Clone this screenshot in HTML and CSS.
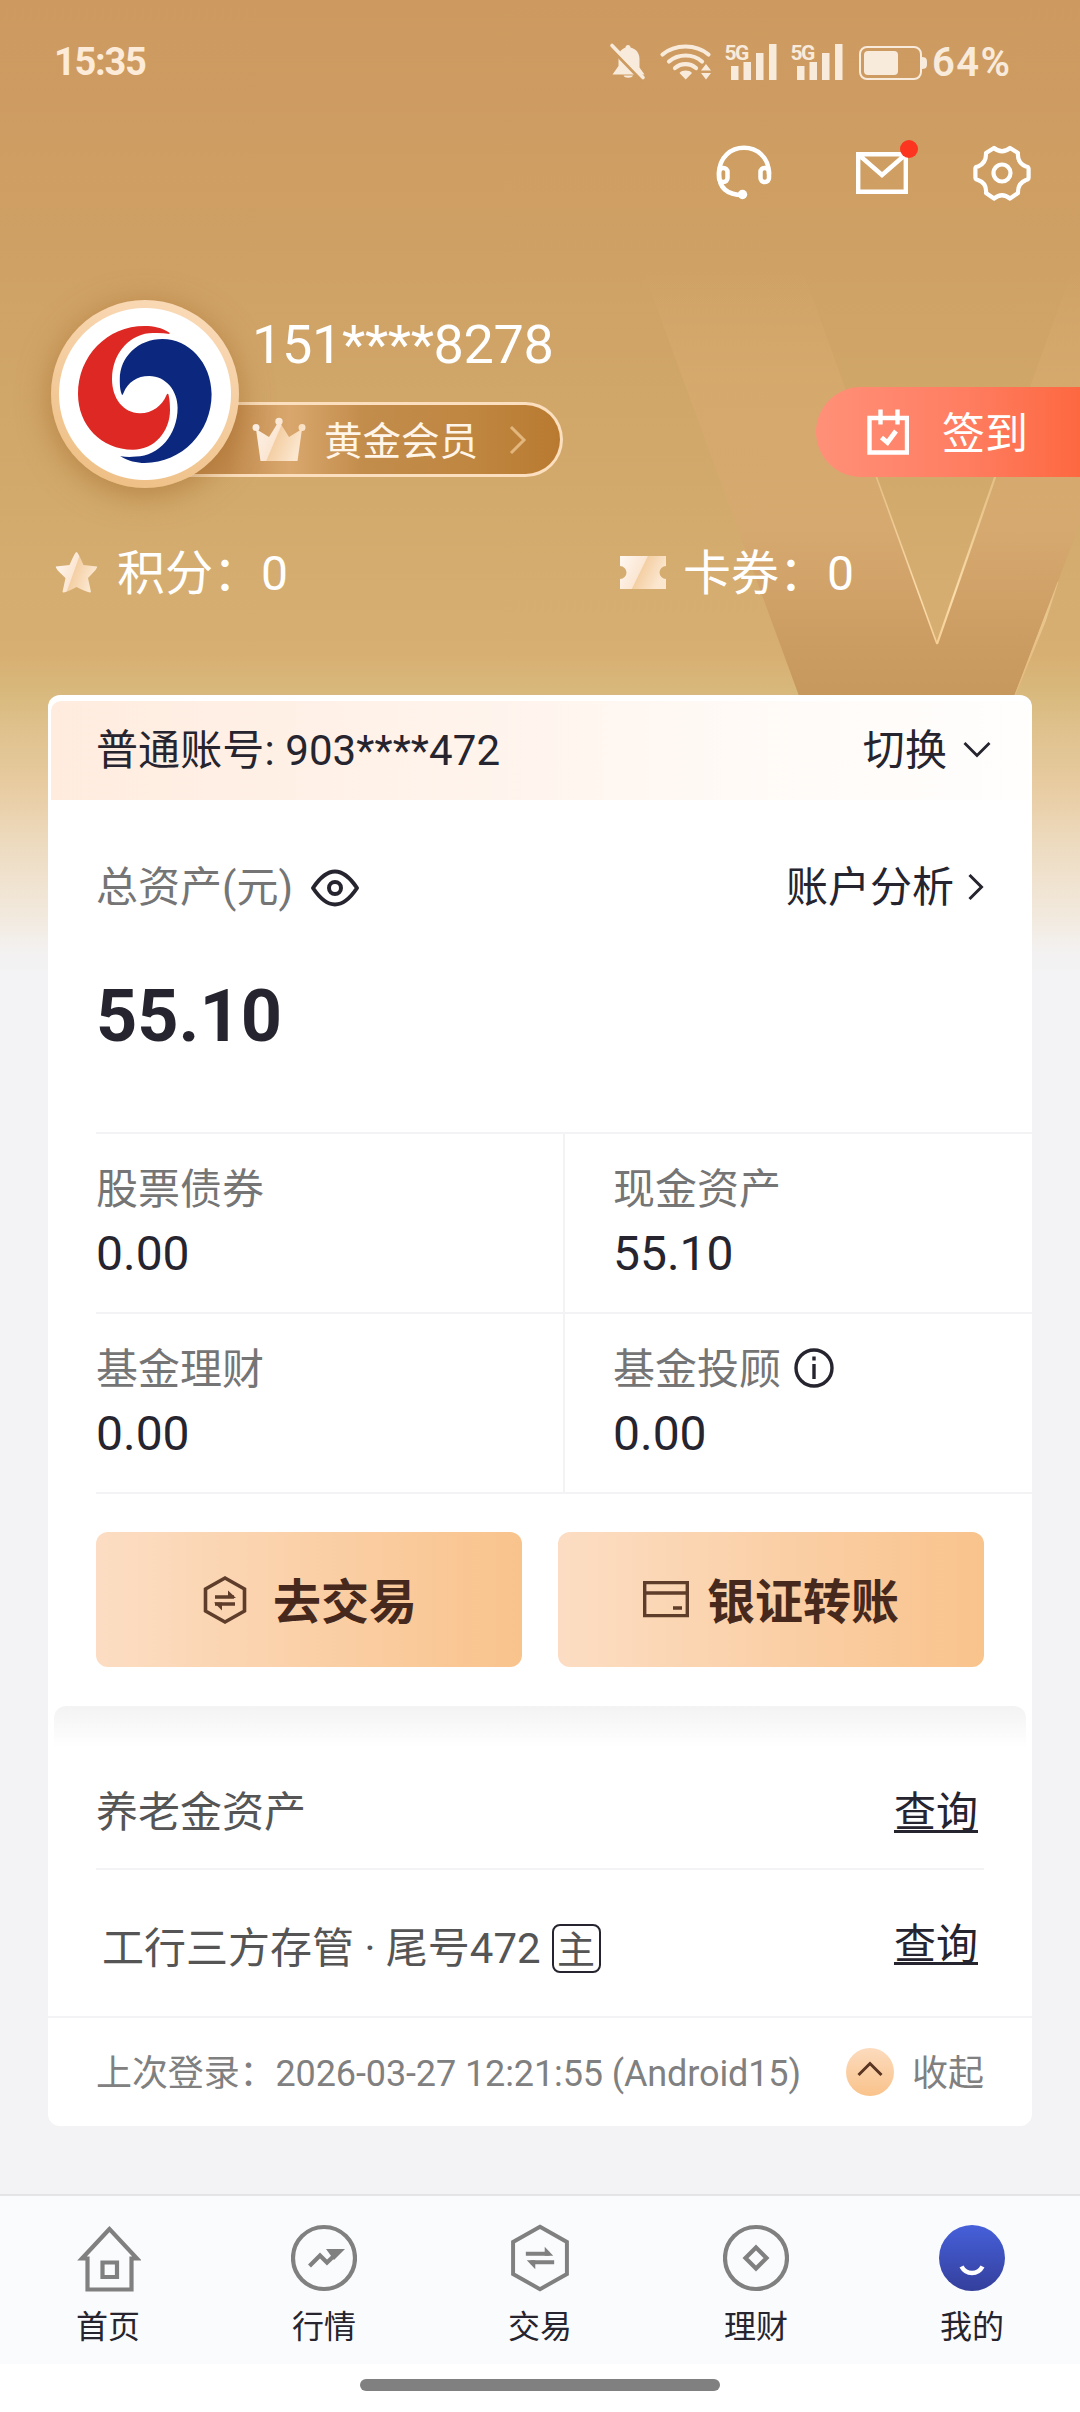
FILE: index.html
```html
<!DOCTYPE html>
<html lang="zh-CN">
<head>
<meta charset="utf-8">
<title>我的</title>
<link rel="stylesheet" href="styles.css">
</head>
<body>
<div class="page">
  <svg class="backdrop" width="1080" height="960" viewBox="0 0 1080 960" aria-hidden="true">
    <defs>
      <linearGradient id="vFill" x1="0" y1="270" x2="0" y2="700" gradientUnits="userSpaceOnUse">
        <stop offset="0" stop-color="#d8aa70" stop-opacity="0"/>
        <stop offset=".25" stop-color="#d7aa6e" stop-opacity=".7"/>
        <stop offset=".6" stop-color="#d6a970"/>
        <stop offset=".86" stop-color="#cc9d63"/>
        <stop offset="1" stop-color="#c6985e"/>
      </linearGradient>
      <linearGradient id="vLine" x1="0" y1="440" x2="0" y2="645" gradientUnits="userSpaceOnUse">
        <stop offset="0" stop-color="#f3cf98" stop-opacity=".4"/>
        <stop offset=".75" stop-color="#fbdcaa"/>
        <stop offset="1" stop-color="#f6cf96"/>
      </linearGradient>
      <linearGradient id="vEdge" x1="0" y1="560" x2="0" y2="695" gradientUnits="userSpaceOnUse">
        <stop offset="0" stop-color="#ecca92" stop-opacity="0"/>
        <stop offset=".4" stop-color="#ecca92" stop-opacity=".8"/>
        <stop offset="1" stop-color="#e3ba7e"/>
      </linearGradient>
    </defs>
    <path d="M632 240H792L937 645L1083 240H1186L1015 696H799Z" fill="url(#vFill)"/>
    <path d="M863 440L937 644" fill="none" stroke="url(#vLine)" stroke-width="1.600"/>
    <path d="M937 644L1008 440" fill="none" stroke="url(#vLine)" stroke-width="2.200"/>
    <path d="M1015 695L1058 582L1045 622Z" fill="url(#vEdge)" stroke="url(#vEdge)" stroke-width="1"/>
  </svg>

  <header class="status">
    <span class="status-time">15:35</span>
    <svg width="321" height="40" viewBox="609 42 321 40" fill="#f8ebdc">
      <path d="M628 45c1.500 0 2.500 1 2.500 2.500 6 1.500 9 6 9 12v8l5 7H612.500l6-8.500v-8c0-6 3-9 7-10.500 0-1.500 1-2.500 2.500-2.500zM623.500 75.500h9.500c-1 3-8.500 3-9.500 0z"/>
      <path d="M610.500 47.500L642 80" stroke="#cd9a60" stroke-width="4"/>
      <path d="M612 45.500L643 77.500" stroke="#f8ebdc" stroke-width="3.600" stroke-linecap="round"/>
      <g fill="none" stroke="#f8ebdc" stroke-width="4.200" stroke-linecap="round"><path d="M662.500 54.500c12.500-10.700 33.500-10.700 46 0"/><path d="M669 61.500c9.500-8 24-8 33 0"/><path d="M675 68c6-5.200 15-5.200 21 0"/></g>
      <path d="M679.500 73c3-3.200 9.500-3.200 12.500 0L685.700 79.500zM701 70.500L706 64l5 6.500zM701 73h10l-5 6.500z"/>
      <text x="724.500" y="59.500" class="net">5G</text><text x="790.500" y="59.500" class="net">5G</text>
      <path d="M731 66h7.500v14H731zM743.500 62h7.500v18h-7.500zM756 53h7.500v27H756zM769 44h7.500v36H769zM797 66h7.500v14H797zM809.500 62h7.500v18h-7.500zM822 53h7.500v27H822zM835 44h7.500v36H835z"/>
      <rect x="860" y="47" width="61" height="32" rx="7" fill="none" stroke="#f8ebdc" stroke-width="2"/>
      <rect x="864" y="51" width="34" height="24" rx="4"/><path d="M922 57c5 0 5 3 5 6s0 6-5 6z"/>
    </svg>
    <span class="status-power">64%</span>
  </header>

  <div class="toolbar">
    <svg width="60" height="60" viewBox="714 143 60 60" fill="none" stroke="#fff" stroke-width="4.500"><path d="M719 174c0-35 50-35 50 0M719 174c0 14 8 21 24 21"/><rect x="719" y="168" width="8.500" height="14" rx="4"/><rect x="760.500" y="168" width="8.500" height="14" rx="4"/><circle cx="742.500" cy="194.500" r="4.700" fill="#fff" stroke="none"/></svg>
    <svg class="mail" width="66" height="60" viewBox="854 137 66 60" fill="none" stroke="#fff" stroke-width="4.400"><path d="M858.200 154.200h47.600v37.600h-47.600zM859 155l23 20 23-20"/><circle cx="909" cy="149" r="9" fill="#fc3520" stroke="none"/></svg>
    <svg width="64" height="60" viewBox="969.500 142.500 64 60" fill="none" stroke="#fff" stroke-width="4.200" stroke-linejoin="round"><path d="M993.500 147.500q8 6.500 16 0l8 5q-1 10 8 13.500 2.300 0 2.600 2v9q0 2-2.600 2.500-8.500 3.500-8 13l-8 5.500q-8-6.500-16 0l-8-5.500q1-10-8-13-2.600-.5-2.600-2.500v-9q0-2 2.600-2 8.500-3.500 8-13.500z"/><circle cx="1001.500" cy="172.500" r="8.500"/></svg>
  </div>

  <section class="profile">
    <div class="avatar">
      <svg width="136" height="139" viewBox="77 324 136 139"><path fill="#de2823" d="M169.500 331.700C162 326.500 153 325 144.700 325C107 325 78 355 78 393C78 424 101 448.700 133 448.700C155 448.700 170 430 170 409C170 402 169.500 398 168.500 393.500Q167.500 392 166.500 394C162 405 152 412.500 139.700 412.300C123 412 112 397 112 378.300C112 351 131 332 153 332Q162 331.500 169.500 333Z"/><path fill="#0b287e" d="M120 455C128 460 137 462 144.700 462C182 462 211.600 431 211.600 393.300C211.600 361 188 338 162.600 338C138 338 119.800 356 119.800 378.300C119.800 385 120 389 122 394Q122.500 394.500 123.500 392C128 381 137 375 149.200 375C166 375 177.600 390 177.600 406.700C177.600 434 159 455 136 455.500Q128 456.500 121 455.200Z"/></svg>
    </div>
    <div class="identity">
      <div class="phone">151****8278</div>
      <div class="member">
        <svg width="56" height="46" viewBox="251 415 56 46"><defs><linearGradient id="pale" x1="0" y1="0" x2="1" y2=".35"><stop offset="0" stop-color="#fff8f2"/><stop offset=".53" stop-color="#fbe6d2"/><stop offset=".55" stop-color="#f4cfa4"/><stop offset="1" stop-color="#fbe7cf"/></linearGradient></defs><path fill="url(#pale)" d="M256 427l13 8 10-16 10 16 13-8-4.500 32h-37zM252.500 425.500a3.500 3.500 0 1 1 7 0 3.500 3.500 0 1 1-7 0zM275.300 419.500a3.700 3.700 0 1 1 7.400 0 3.700 3.700 0 1 1-7.400 0zM298.500 425.500a3.500 3.500 0 1 1 7 0 3.500 3.500 0 1 1-7 0z"/></svg>
        <span class="member-name">黄金会员</span>
        <svg width="18" height="30" viewBox="0 0 18 30" fill="none" stroke="#e3b67e" stroke-width="3"><path d="M2 2l13 13L2 28"/></svg>
      </div>
    </div>
    <div class="checkin">
      <svg width="42" height="46" viewBox="867 408.500 42 46" fill="none" stroke="#fff" stroke-width="4.400"><path d="M869.500 417.500h37.500v34.500h-37.500zM880.500 409v15M897.500 409v15"/><path d="M881.500 437l6 5 8.500-11.500" stroke-width="4.800"/></svg>
      <span>签到</span>
    </div>
  </section>

  <section class="stats">
    <div class="stat"><svg width="46" height="44" viewBox="54 550 46 44"><path fill="url(#pale)" d="M76.500 552q1.500 0 7 13l13.500 1.500q1.500 1-9 11.500l3 14q-1 2-14.500-5-12.500 7-14 5l3-14q-11-10-9.500-11.500l13.500-1.500q5.500-13 7-13z"/></svg><span class="stat-text">积分：0</span></div>
    <div class="stat"><svg width="46" height="33" viewBox="0 0 46 33"><path fill="url(#pale)" d="M0 0h46v10a6.500 6.500 0 0 0 0 13v10H0V23a6.500 6.500 0 0 0 0-13z"/></svg><span class="stat-text">卡券：0</span></div>
  </section>

  <main class="card">
    <div class="account">
      <span>普通账号: 903****472</span>
      <span class="switch">切换<svg width="28" height="18" viewBox="0 0 28 18" fill="none" stroke="#26242e" stroke-width="2.800"><path d="M1.500 2L14 14.500 26.500 2"/></svg></span>
    </div>
    <section class="total">
      <div class="total-head">
        <span class="muted">总资产(元)</span>
        <svg class="eye" width="50" height="38" viewBox="310 869 50 38" fill="none" stroke="#26242e" stroke-width="4"><path d="M313 888q22-33 44 0-22 33-44 0z" stroke-linejoin="round"/><circle cx="335" cy="888" r="6"/></svg>
        <span class="analysis">账户分析<svg width="16" height="28" viewBox="0 0 16 28" fill="none" stroke="#26242e" stroke-width="3"><path d="M1.500 2L13.500 14 1.500 26"/></svg></span>
      </div>
      <div class="amount">55.10</div>
    </section>
    <section class="assets">
      <div class="asset"><div class="muted">股票债券</div><div class="value">0.00</div></div>
      <div class="asset"><div class="muted">现金资产</div><div class="value">55.10</div></div>
      <div class="asset"><div class="muted">基金理财</div><div class="value">0.00</div></div>
      <div class="asset"><div class="muted info-row">基金投顾<svg width="40" height="40" viewBox="0 0 40 40" fill="none" stroke="#26242e" stroke-width="3.400"><circle cx="20" cy="20" r="18"/><path d="M20 16v15M20 8.500v4"/></svg></div><div class="value">0.00</div></div>
    </section>
    <div class="actions">
      <button class="action"><svg class="hex" width="44" height="50" viewBox="0 0 44 50" fill="none" stroke="#5f3d2b" stroke-width="3.600"><path d="M22 3L41.500 14V36L22 47 2.500 36V14z"/><path d="M12 22h19M12 29h20"/><path d="M25 15.500l8 7.500h-8zM19 35.500L11 27.500h8z" fill="#5f3d2b" stroke="none"/></svg>去交易</button>
      <button class="action"><svg class="bank" width="46" height="38" viewBox="0 0 46 38" fill="none" stroke="#5f3d2b" stroke-width="3.400"><path d="M1.700 2.600h42.600v33H1.700zM1.700 13h42.600M30 28h9"/></svg>银证转账</button>
    </div>
    <div class="fold"></div>
    <div class="row"><span>养老金资产</span><a class="query">查询</a></div>
    <div class="row row-bank"><span class="bank-name">工行三方存管 · 尾号472<b class="tag">主</b></span><a class="query">查询</a></div>
    <footer class="login">
      <span class="login-text">上次登录：2026-03-27 12:21:55 (Android15)</span>
      <span class="collapse"><svg width="48" height="48" viewBox="0 0 48 48"><defs><linearGradient id="peach" x1="0" y1="0" x2="0" y2="1"><stop offset="0" stop-color="#fcdbbd"/><stop offset="1" stop-color="#f9c38b"/></linearGradient></defs><circle cx="24" cy="24" r="24" fill="url(#peach)"/><path d="M12.500 27L24 15.500 35.500 27" fill="none" stroke="#5a3523" stroke-width="3"/></svg>收起</span>
    </footer>
  </main>

  <nav class="tabs">
    <a class="tab"><svg width="66" height="68" viewBox="75 2224 66 68" fill="none" stroke="#808080" stroke-width="4.200"><path d="M109.500 2229L82 2258.500H87.500V2289.500H131.500V2258.500H137z"/><path d="M102.500 2262.500h14.500v14.500h-14.500z"/></svg><span>首页</span></a>
    <a class="tab"><svg width="66" height="68" viewBox="-33 -34 66 68" fill="none" stroke="#808080" stroke-width="4.200"><circle r="31"/><path d="M-14.500 8L-4-2.500 3 4.500 15-7"/><path d="M2-9H21L10 2z" fill="#808080" stroke="none"/></svg><span>行情</span></a>
    <a class="tab"><svg width="66" height="72" viewBox="-33 -36 66 72" fill="none" stroke="#808080" stroke-width="4.200"><path d="M0-33L28.500-17V17L0 33-28.500 17V-17z"/><path d="M-15-4.500H10M-10 4.500H15"/><path d="M5-12L14-2.500H5zM-5 12L-14 2.500H-5z" fill="#808080" stroke="none"/></svg><span>交易</span></a>
    <a class="tab"><svg width="66" height="68" viewBox="-33 -34 66 68" fill="none" stroke="#808080" stroke-width="4.200"><circle r="31"/><path d="M0-10.500L10.500 0 0 10.500-10.500 0z"/></svg><span>理财</span></a>
    <a class="tab"><svg width="66" height="68" viewBox="-33 -34 66 68"><defs><linearGradient id="me" x1="0" y1="0" x2="0" y2="1"><stop offset="0" stop-color="#4660da"/><stop offset="1" stop-color="#343f9c"/></linearGradient></defs><circle r="33" fill="url(#me)"/><path d="M-10.500 8.500q3.500 6.500 10.500 6.500t10.500-6.500" fill="none" stroke="#fff" stroke-width="4.500"/></svg><span>我的</span></a>
  </nav>
  <div class="gesture"><div class="gesture-bar"></div></div>
</div>
</body>
</html>
```
FILE: styles.css
```css
* { box-sizing: border-box; }
body {
  margin: 0;
  font-family: Roboto, "Noto Sans CJK SC", sans-serif;
  line-height: 1.2;
  color: #26242e;
}
svg { display: block; flex: none; }
.page {
  position: relative;
  isolation: isolate;
  display: flex;
  flex-direction: column;
  width: 1080px;
  height: 2412px;
  overflow: hidden;
  background: linear-gradient(#cd9960 0, #cfa165 270px, #d2aa6c 500px, #d8af73 655px, #d8b87b 690px, #ddc08a 722px, #e8cba0 785px, #eddbc0 845px, #f2e9dd 915px, #f3f1f0 950px, #f3f3f5 975px);
}
.backdrop { position: absolute; left: 0; top: 0; z-index: -1; }

.status { display: flex; align-items: center; height: 124px; padding: 0 69px 0 54px; color: #fcebd8; font-weight: 700; }
.status-time { font-size: 38px; letter-spacing: -1.3px; margin: 2px auto 0 0; }
.status-power { font-size: 40px; font-weight: 600; letter-spacing: 1.4px; width: 79px; white-space: nowrap; color: #f8ebdc; margin: 2px 0 0 2px; }
.net { font: 700 21px Roboto, sans-serif; letter-spacing: -1.5px; }

.toolbar { display: flex; justify-content: flex-end; align-items: center; height: 98px; padding-right: 46px; }
.mail { margin: 0 50px 12px 80px; }

.profile { display: flex; align-items: flex-start; height: 188px; margin-top: 78px; padding-left: 51px; }
.avatar {
  z-index: 1;
  display: flex;
  align-items: center;
  justify-content: center;
  width: 188px;
  height: 188px;
  border-radius: 50%;
  background: radial-gradient(#fff 85.5px, transparent 86.5px), linear-gradient(200deg, #fbdcbc, #edbd80);
  box-shadow: 0 6px 32px rgba(158, 100, 35, .55);
}
.identity { display: flex; flex-direction: column; }
.phone { margin: 13px 0 0 13px; font-size: 54px; line-height: 64px; letter-spacing: -.35px; color: #fff; height: 89px; }
.member {
  display: flex;
  align-items: center;
  width: 419px;
  height: 75px;
  margin-left: -95px;
  padding: 0 0 0 107px;
  border: 3px solid #fbdfbe;
  border-left: 0;
  border-radius: 0 38px 38px 0;
  background: linear-gradient(90deg, #c28b4e 20%, #d9a76d 35%, #c28c4b 53%, #bf8640 80%, #b97a30);
}
.member-name { width: 185px; margin: 5px 0 0 17px; font-size: 38.500px; color: #fff5e8; }
.checkin {
  display: flex;
  align-items: center;
  width: 264px;
  height: 90px;
  margin: 87px 0 0 auto;
  padding-left: 51px;
  gap: 33px;
  border-radius: 45px 0 0 45px;
  background: linear-gradient(90deg, #ff9078, #ff7e62 55%, #fd6840);
  color: #fff;
  font-size: 43px;
}
.checkin span { margin-top: 6px; }

.stats { display: grid; grid-template-columns: 566px 1fr; height: 72px; margin: 48px 0 87px 54px; }
.stat { display: flex; align-items: center; gap: 17px; color: #fff; font-size: 48px; }
.stat-text { margin-top: 4px; }

.card { display: flex; flex-direction: column; width: 984px; height: 1431px; margin: 0 48px; padding: 6px 0 0; border-radius: 12px; background: #fff; overflow: hidden; }
.account {
  display: flex;
  justify-content: space-between;
  align-items: center;
  height: 99px;
  margin: 0 3px;
  padding: 2px 38px 0 45px;
  border-radius: 10px 10px 0 0;
  background: linear-gradient(90deg, #ffecdf, #fff5ee 50%, #fffaf6 70%, #fffefd);
  font-size: 42px;
  letter-spacing: .1px;
}
.switch, .analysis { display: flex; align-items: center; gap: 16px; }
.switch svg { margin-bottom: 2px; }
.total { height: 332px; padding: 57px 48px 0; }
.total-head { display: flex; align-items: center; height: 60px; padding-top: 2px; font-size: 42px; }
.muted { color: #757575; }
.eye { margin-left: 17px; }
.analysis { margin-left: auto; gap: 14px; }
.analysis svg { margin-bottom: 2px; }
.amount { margin-top: 58px; font-size: 72px; line-height: 84px; font-weight: 700; }

.assets { display: grid; grid-template-columns: 468px 468px; margin-left: 48px; border-bottom: 2px solid #f3f3f5; }
.asset { height: 180px; padding-top: 24px; border-top: 2px solid #f3f3f5; font-size: 42px; line-height: 64px; }
.asset:nth-child(even) { padding-left: 48px; border-left: 2px solid #f3f3f5; margin-left: -1px; }
.info-row { display: flex; align-items: center; gap: 13px; }
.info-row svg { margin-bottom: 4px; }
.value { font-size: 48px; line-height: 64px; }

.actions { display: grid; grid-template-columns: 1fr 1fr; gap: 36px; padding: 38px 48px 39px; }
.action {
  display: flex;
  align-items: center;
  justify-content: center;
  height: 135px;
  padding: 6px 0 0;
  border: 0;
  border-radius: 12px;
  background: linear-gradient(90deg, #fcddc3, #f9c38c);
  font: 700 48px/1.2 Roboto, "Noto Sans CJK SC", sans-serif;
  color: #46281d;
}
.hex { margin: 0 26px 6px 2px; }
.bank { margin: 0 18px 8px 0; }

.fold { flex: none; height: 42px; margin: 0 6px; border-radius: 12px 12px 0 0; background: linear-gradient(#f3f3f3, #fff); }
.row { display: flex; justify-content: space-between; align-items: center; flex: none; height: 122px; margin: 0 48px; padding: 10px 6px 0 0; border-bottom: 2px solid #f3f3f5; font-size: 42px; color: #555; }
.query { color: #26242e; text-decoration: underline; text-decoration-thickness: 2.500px; text-underline-offset: 3px; }
.row-bank { height: 148px; margin: 0; padding: 4px 54px 0 54px; }
.bank-name { display: flex; align-items: center; padding-top: 8px; }
.tag { display: flex; align-items: center; justify-content: center; width: 49px; height: 49px; margin-left: 11px; border: 2px solid #26242e; border-radius: 8px; font-size: 38px; font-weight: 400; padding-top: 3px; }
.login { display: flex; justify-content: space-between; align-items: center; height: 108px; padding: 5px 48px 0 48px; font-size: 36px; color: #808080; }
.login-text { letter-spacing: -.11px; }
.collapse { display: flex; align-items: center; gap: 18px; }
.collapse svg { margin-bottom: 6px; }

.tabs { display: grid; grid-template-columns: repeat(5, 1fr); height: 170px; margin-top: 68px; border-top: 2px solid #e4e4e6; background: #fafbfd; }
.tab { display: flex; flex-direction: column; align-items: center; padding-top: 28px; font-size: 32px; line-height: 40px; }
.tab svg { height: 68px; }
.tab span { margin-top: 15px; }
.gesture { display: flex; justify-content: center; height: 48px; padding-top: 15px; background: #fff; }
.gesture-bar { width: 360px; height: 12px; border-radius: 6px; background: #808080; }
```
